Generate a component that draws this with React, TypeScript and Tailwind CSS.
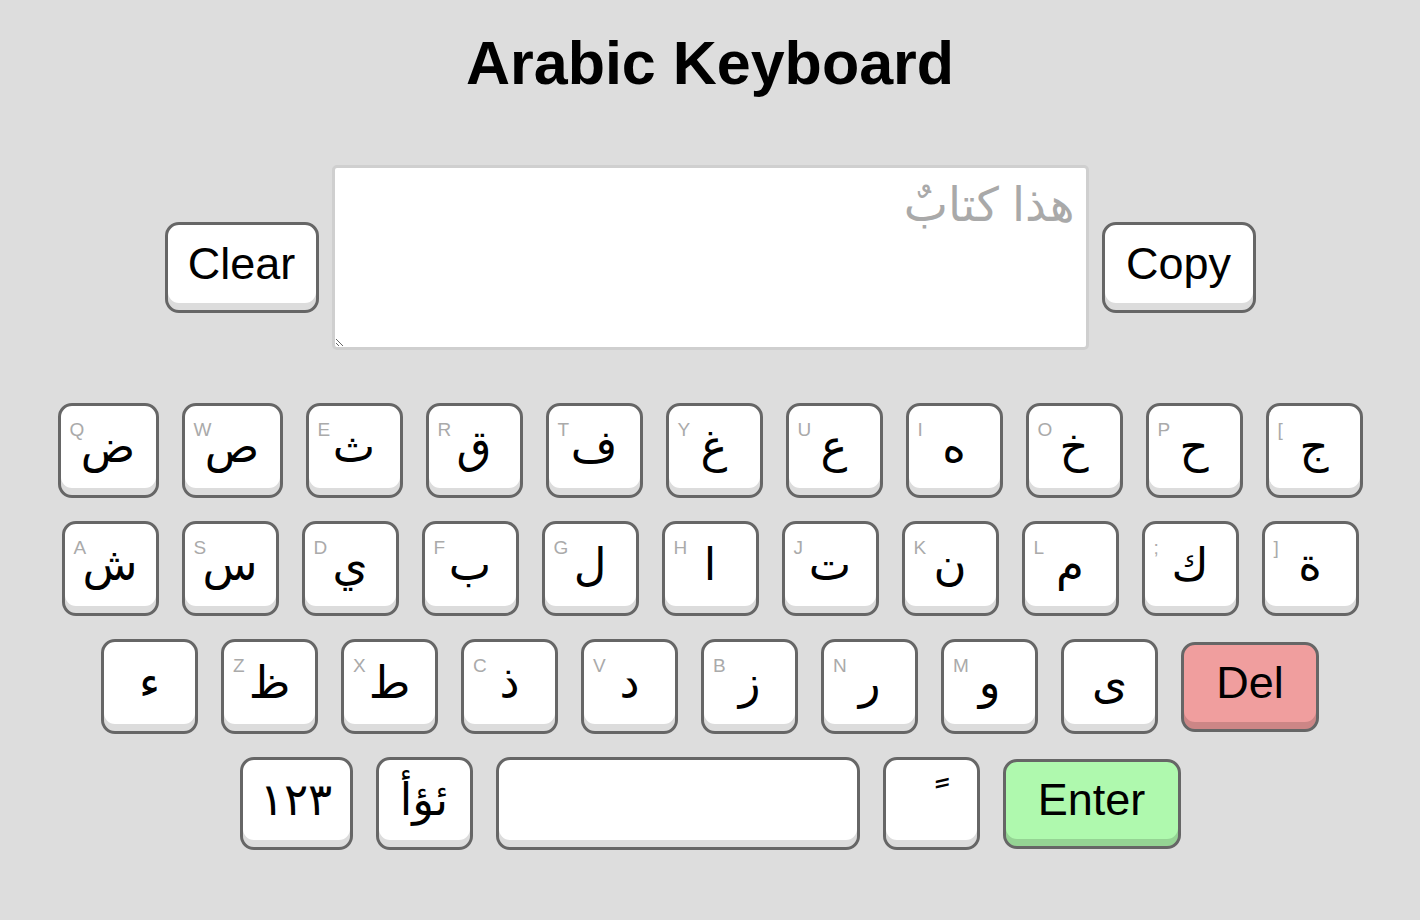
import { ReactNode } from "react";

const font = { fontFamily: '"Liberation Sans", "DejaVu Sans", sans-serif' };

type KeyDef = { ch: ReactNode; en?: string; w?: string; tone?: "del" | "enter" };

const rows: KeyDef[][] = [
  [
    { ch: "ض", en: "Q", w: "w-[101px]" },
    { ch: "ص", en: "W", w: "w-[101px]" },
    { ch: "ث", en: "E" },
    { ch: "ق", en: "R" },
    { ch: "ف", en: "T" },
    { ch: "غ", en: "Y" },
    { ch: "ع", en: "U" },
    { ch: "ه", en: "I" },
    { ch: "خ", en: "O" },
    { ch: "ح", en: "P" },
    { ch: "ج", en: "[" },
  ],
  [
    { ch: "ش", en: "A" },
    { ch: "س", en: "S" },
    { ch: "ي", en: "D" },
    { ch: "ب", en: "F" },
    { ch: "ل", en: "G" },
    { ch: "ا", en: "H" },
    { ch: "ت", en: "J" },
    { ch: "ن", en: "K" },
    { ch: "م", en: "L" },
    { ch: "ك", en: ";" },
    { ch: "ة", en: "]" },
  ],
  [
    { ch: "ء" },
    { ch: "ظ", en: "Z" },
    { ch: "ط", en: "X" },
    { ch: "ذ", en: "C" },
    { ch: "د", en: "V" },
    { ch: "ز", en: "B" },
    { ch: "ر", en: "N" },
    { ch: "و", en: "M" },
    { ch: "ى" },
    { ch: "Del", w: "w-[138px]", tone: "del" },
  ],
  [
    { ch: "١٢٣", w: "w-[113px]" },
    { ch: "ئؤأ" },
    { ch: "", w: "w-[364px]" },
    { ch: "ً" },
    { ch: "Enter", w: "w-[178px]", tone: "enter" },
  ],
];

const Key = ({ k, short }: { k: KeyDef; short?: boolean }) => {
  const color =
    k.tone === "del"
      ? "bg-[#f09e9e] shadow-[inset_0_-7px_0_#cc8686]"
      : k.tone === "enter"
        ? "bg-[#aff9ae] shadow-[inset_0_-7px_0_#95d494]"
        : "bg-white shadow-[inset_0_-7px_0_#dcdcdc]";
  const h = k.tone ? "h-[90px]" : short ? "h-[93px]" : "h-[95px]";
  return (
    <button
      className={`relative flex items-center justify-center pb-[8px] border-[3px] border-[#666666] rounded-[14px] text-[45px] leading-none text-black ${color} ${h} ${k.w ?? "w-[97px]"}`}
    >
      {k.en && (
        <span className="absolute top-[14px] left-[9px] text-[19px] leading-none text-[#aaaaaa]">
          {k.en}
        </span>
      )}
      <span dir={k.tone ? "ltr" : "rtl"}>{k.ch}</span>
    </button>
  );
};

const SideButton = ({ label }: { label: string }) => (
  <button className="mt-[57px] flex items-center justify-center pb-[8px] w-[154px] h-[91px] bg-white border-[3px] border-[#666666] rounded-[14px] shadow-[inset_0_-7px_0_#dcdcdc] text-[45px] leading-none text-black">
    {label}
  </button>
);

export default function App() {
  return (
    <div className="min-h-screen bg-[#dddddd] flex flex-col items-center pt-[33px]" style={font}>
      <h1 className="text-[61px] leading-[60px] font-bold text-black">Arabic Keyboard</h1>

      <div className="mt-[72px] flex items-start gap-[13px]">
        <SideButton label="Clear" />
        <textarea
          dir="rtl"
          placeholder="هذا كتابٌ"
          className="w-[757px] h-[185px] bg-white border-[3px] border-[#cfcfcf] rounded-[5px] px-[11px] py-[8px] text-[47px] leading-tight text-black placeholder:text-[#a9a9a9] outline-none"
        />
        <SideButton label="Copy" />
      </div>

      <div className="mt-[53px] flex flex-col items-center gap-[23px]">
        {rows.map((row, ri) => (
          <div key={ri} className="flex items-center gap-[23px]">
            {row.map((k, ki) => (
              <Key key={ki} k={k} short={ri === 3} />
            ))}
          </div>
        ))}
      </div>
    </div>
  );
}
